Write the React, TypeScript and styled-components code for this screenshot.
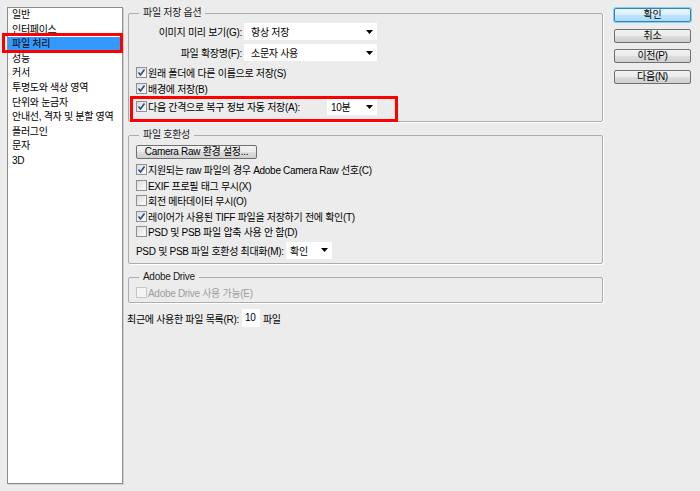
import React from 'react';
import styled, { createGlobalStyle } from 'styled-components';

const GlobalStyle = createGlobalStyle`
  html, body {
    margin: 0;
    padding: 0;
    background: #ececec;
  }
  body {
    font-family: "Liberation Sans", "Noto Sans CJK KR", sans-serif;
    font-size: 10px;
    letter-spacing: -0.3px;
    color: #000;
  }
  #root {
    width: 700px;
    height: 491px;
  }
`;

const categories = [
  '일반',
  '인터페이스',
  '파일 처리',
  '성능',
  '커서',
  '투명도와 색상 영역',
  '단위와 눈금자',
  '안내선, 격자 및 분할 영역',
  '플러그인',
  '문자',
  '3D',
];

const Arrow = () => (
  <svg width="7" height="4" viewBox="0 0 7 4">
    <polygon points="0,0 7,0 3.5,4" fill="#000" />
  </svg>
);

const Check = () => (
  <svg width="9" height="9" viewBox="0 0 9 9">
    <polyline points="1.5,4.5 3.5,7 7.5,1.5" fill="none" stroke="#2b4a8c" strokeWidth="1.6" />
  </svg>
);

const CheckItem = ({ checked, disabled, children }: { checked?: boolean; disabled?: boolean; children: React.ReactNode }) => (
  <>
    <Box $disabled={disabled}>{checked && <Check />}</Box>
    <CheckText $disabled={disabled}>{children}</CheckText>
  </>
);

const Select = ({ value, pad }: { value: string; pad: number }) => (
  <SelectBox $pad={pad}>
    <span>{value}</span>
    <Arrow />
  </SelectBox>
);

const App = () => {
  return (
    <>
      <GlobalStyle />
      <Window>
        <CategoryList>
          {categories.map((c) => (
            <CategoryItem key={c} $selected={c === '파일 처리'}>
              {c}
              {c === '파일 처리' && <SideMark />}
            </CategoryItem>
          ))}
        </CategoryList>

        <Main>
          <Group $pt={4} $pb={6}>
            <Legend>파일 저장 옵션</Legend>
            <SelectRow $label={106} $w={133}>
              <RowLabel>이미지 미리 보기(G):</RowLabel>
              <Select value="항상 저장" pad={7} />
            </SelectRow>
            <SelectRow $label={106} $w={133} $mt={4}>
              <RowLabel>파일 확장명(F):</RowLabel>
              <Select value="소문자 사용" pad={7} />
            </SelectRow>
            <CheckRow $h={16} $mt={3}>
              <CheckItem checked>원래 폴더에 다른 이름으로 저장(S)</CheckItem>
            </CheckRow>
            <CheckRow $h={16}>
              <CheckItem checked>배경에 저장(B)</CheckItem>
            </CheckRow>
            <MarkedRow>
              <CheckCell>
                <CheckItem checked>다음 간격으로 복구 정보 자동 저장(A):</CheckItem>
              </CheckCell>
              <Select value="10분" pad={4} />
              <RowMark />
            </MarkedRow>
          </Group>

          <Group $pt={4} $pb={4.5}>
            <Legend>파일 호환성</Legend>
            <PushButton $w={121}>Camera Raw 환경 설정...</PushButton>
            <CheckRow $h={15.5} $mt={3}>
              <CheckItem checked>지원되는 raw 파일의 경우 Adobe Camera Raw 선호(C)</CheckItem>
            </CheckRow>
            <CheckRow $h={15.5}>
              <CheckItem>EXIF 프로필 태그 무시(X)</CheckItem>
            </CheckRow>
            <CheckRow $h={15.5}>
              <CheckItem>회전 메타데이터 무시(O)</CheckItem>
            </CheckRow>
            <CheckRow $h={15.5}>
              <CheckItem checked>레이어가 사용된 TIFF 파일을 저장하기 전에 확인(T)</CheckItem>
            </CheckRow>
            <CheckRow $h={15.5}>
              <CheckItem>PSD 및 PSB 파일 압축 사용 안 함(D)</CheckItem>
            </CheckRow>
            <SelectRow $label={148} $w={46} $mt={2}>
              <RowLabel $left>PSD 및 PSB 파일 호환성 최대화(M):</RowLabel>
              <Select value="확인" pad={4} />
            </SelectRow>
          </Group>

          <Group $pt={1} $pb={2}>
            <Legend>Adobe Drive</Legend>
            <CheckRow $h={16}>
              <CheckItem disabled>Adobe Drive 사용 가능(E)</CheckItem>
            </CheckRow>
          </Group>

          <RecentRow>
            <span>최근에 사용한 파일 목록(R):</span>
            <NumberField>10</NumberField>
            <span>파일</span>
          </RecentRow>
        </Main>

        <ButtonColumn>
          <DialogButton $primary>확인</DialogButton>
          <DialogButton>취소</DialogButton>
          <DialogButton>이전(P)</DialogButton>
          <DialogButton>다음(N)</DialogButton>
        </ButtonColumn>
      </Window>
    </>
  );
};

const Window = styled.div`
  display: flex;
  align-items: flex-start;
  box-sizing: border-box;
  height: 491px;
  padding: 7px 0 0 7px;
`;

const CategoryList = styled.div`
  box-sizing: border-box;
  width: 116px;
  height: 477px;
  margin-right: 5px;
  background: #fff;
  border: 1px solid #8d8d8d;
  box-shadow: 1px 1px 0 #d2d2d2;
`;

const CategoryItem = styled.div<{ $selected?: boolean }>`
  position: relative;
  height: 14.6px;
  line-height: 14.6px;
  padding-left: 4px;
  white-space: nowrap;
  background: ${(p) => (p.$selected ? '#3399ff' : 'transparent')};
`;

const SideMark = styled.span`
  position: absolute;
  left: -6px;
  top: -4px;
  width: 121px;
  height: 20px;
  box-sizing: border-box;
  border: 3px solid #ff0000;
`;

const Main = styled.div`
  display: flex;
  flex-direction: column;
  width: 475px;
`;

const Group = styled.fieldset<{ $pt: number; $pb: number }>`
  margin: 0;
  padding: ${(p) => p.$pt}px 7px ${(p) => p.$pb}px 7px;
  min-inline-size: 0;
  border: 1px solid #adadad;
  border-radius: 2px;
  box-shadow: 1px 1px 0 #fff;
  & + & {
    margin-top: 7px;
  }
`;

const Legend = styled.legend`
  height: 12px;
  line-height: 12px;
  padding: 0 4px;
  margin-left: 3px;
  color: #1a1a1a;
`;

const SelectRow = styled.div<{ $label: number; $w: number; $mt?: number }>`
  display: grid;
  grid-template-columns: ${(p) => p.$label}px ${(p) => p.$w}px;
  column-gap: 2px;
  align-items: center;
  height: 17px;
  margin-top: ${(p) => p.$mt ?? 0}px;
`;

const RowLabel = styled.span<{ $left?: boolean }>`
  text-align: ${(p) => (p.$left ? 'left' : 'right')};
  white-space: nowrap;
`;

const SelectBox = styled.div<{ $pad: number }>`
  box-sizing: border-box;
  height: 17px;
  display: flex;
  align-items: center;
  justify-content: space-between;
  padding: 0 4px 0 ${(p) => p.$pad}px;
  background: #fff;
`;

const CheckRow = styled.div<{ $h: number; $mt?: number }>`
  display: flex;
  align-items: center;
  height: ${(p) => p.$h}px;
  margin-top: ${(p) => p.$mt ?? 0}px;
  white-space: nowrap;
`;

const CheckCell = styled.div`
  display: flex;
  align-items: center;
  white-space: nowrap;
`;

const MarkedRow = styled.div`
  position: relative;
  display: grid;
  grid-template-columns: 191px 50px;
  align-items: center;
  height: 17px;
  margin-top: 2px;
`;

const RowMark = styled.span`
  position: absolute;
  left: -6px;
  top: -2px;
  width: 268px;
  height: 26px;
  box-sizing: border-box;
  border: 3px solid #ff0000;
`;

const Box = styled.span<{ $disabled?: boolean }>`
  box-sizing: border-box;
  width: 11px;
  height: 11px;
  margin-right: 1px;
  display: flex;
  align-items: center;
  justify-content: center;
  border: 1px solid ${(p) => (p.$disabled ? '#c6c6c6' : '#8e8f8f')};
  background: ${(p) => (p.$disabled ? '#f4f4f4' : 'linear-gradient(135deg, #dcdcdc, #fdfdfd)')};
`;

const CheckText = styled.span<{ $disabled?: boolean }>`
  color: ${(p) => (p.$disabled ? '#9d9d9d' : '#000')};
`;

const PushButton = styled.button<{ $w: number }>`
  display: block;
  box-sizing: border-box;
  width: ${(p) => p.$w}px;
  height: 14px;
  padding: 0;
  font: inherit;
  letter-spacing: inherit;
  line-height: 12px;
  color: #000;
  border: 1px solid #707070;
  border-radius: 2px;
  background: linear-gradient(#f2f2f2 0%, #ebebeb 50%, #dddddd 51%, #cfcfcf 100%);
`;

const RecentRow = styled.div`
  display: flex;
  align-items: center;
  gap: 3px;
  height: 18px;
  margin: 6px 0 0 -1px;
  white-space: nowrap;
`;

const NumberField = styled.span`
  box-sizing: border-box;
  width: 18px;
  height: 18px;
  line-height: 18px;
  padding-left: 3px;
  background: #fff;
`;

const ButtonColumn = styled.div`
  display: flex;
  flex-direction: column;
  gap: 6.67px;
  width: 77px;
  margin: 1px 0 0 11px;
`;

const DialogButton = styled.button<{ $primary?: boolean }>`
  box-sizing: border-box;
  height: 14px;
  padding: 0;
  font: inherit;
  letter-spacing: inherit;
  line-height: 12px;
  color: #000;
  border: 1px solid ${(p) => (p.$primary ? '#3c7fb1' : '#707070')};
  border-radius: 2px;
  background: ${(p) =>
    p.$primary
      ? 'linear-gradient(#eaf6fd 0%, #d9f0fc 50%, #bee6fd 51%, #a7d9f5 100%)'
      : 'linear-gradient(#f2f2f2 0%, #ebebeb 50%, #dddddd 51%, #cfcfcf 100%)'};
  box-shadow: ${(p) => (p.$primary ? '0 0 0 1px #7ed0f5' : 'none')};
`;

export default App;
